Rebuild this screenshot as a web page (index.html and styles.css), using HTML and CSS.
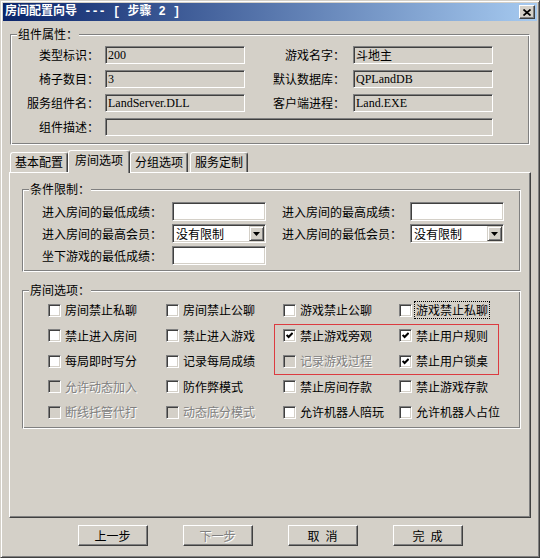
FILE: index.html
```html
<!DOCTYPE html>
<html lang="zh-CN">
<head>
  <meta charset="UTF-8">
  <title>房间配置向导</title>
  <link rel="stylesheet" href="styles.css">
</head>
<body>
  <div class="window">
    <div class="titlebar">
      <span class="title">房间配置向导 --- [ 步骤 2 ]</span>
      <span class="close">
        <svg width="8" height="7" viewBox="0 0 8 7"><path d="M0.5 0.5 L7.5 6.5 M7.5 0.5 L0.5 6.5" stroke="#000" stroke-width="1.7" fill="none"/></svg>
      </span>
    </div>

    <div class="client">
      <!-- 组件属性 -->
      <fieldset class="group">
        <legend>组件属性：</legend>
        <div class="info">
          <label class="lbl">类型标识：</label>
          <input class="field" readonly value="200">
          <label class="lbl r">游戏名字：</label>
          <input class="field" readonly value="斗地主">
          <label class="lbl">椅子数目：</label>
          <input class="field" readonly value="3">
          <label class="lbl r">默认数据库：</label>
          <input class="field" readonly value="QPLandDB">
          <label class="lbl">服务组件名：</label>
          <input class="field" readonly value="LandServer.DLL">
          <label class="lbl r">客户端进程：</label>
          <input class="field" readonly value="Land.EXE">
          <label class="lbl">组件描述：</label>
          <input class="field wide" readonly value="">
        </div>
      </fieldset>

      <div class="tabs">
        <span class="tab">基本配置</span>
        <span class="tab on">房间选项</span>
        <span class="tab">分组选项</span>
        <span class="tab">服务定制</span>
      </div>

      <div class="panel">
        <fieldset class="group">
          <legend>条件限制：</legend>
          <div class="limits">
            <label class="lbl">进入房间的最低成绩：</label>
            <input class="field white">
            <label class="lbl r">进入房间的最高成绩：</label>
            <input class="field white">
            <label class="lbl">进入房间的最高会员：</label>
            <div class="combo"><span>没有限制</span><span class="drop"><svg width="7" height="4" viewBox="0 0 7 4"><path d="M0 0 H7 L3.5 4 Z" fill="#000"/></svg></span></div>
            <label class="lbl r">进入房间的最低会员：</label>
            <div class="combo"><span>没有限制</span><span class="drop"><svg width="7" height="4" viewBox="0 0 7 4"><path d="M0 0 H7 L3.5 4 Z" fill="#000"/></svg></span></div>
            <label class="lbl">坐下游戏的最低成绩：</label>
            <input class="field white">
          </div>
        </fieldset>

        <fieldset class="group options">
          <legend>房间选项：</legend>
          <div class="opts">
            <div class="opt"><span class="box"></span><span>房间禁止私聊</span></div>
            <div class="opt"><span class="box"></span><span>房间禁止公聊</span></div>
            <div class="opt"><span class="box"></span><span>游戏禁止公聊</span></div>
            <div class="opt"><span class="box"></span><span class="focus">游戏禁止私聊</span></div>

            <div class="opt"><span class="box"></span><span>禁止进入房间</span></div>
            <div class="opt"><span class="box"></span><span>禁止进入游戏</span></div>
            <div class="opt"><span class="box"><svg width="7" height="7" viewBox="0 0 7 7"><path d="M0.6 2.9 L2.6 4.9 L6.6 0.9" stroke="#000" stroke-width="2.1" fill="none"/></svg></span><span>禁止游戏旁观</span></div>
            <div class="opt"><span class="box"><svg width="7" height="7" viewBox="0 0 7 7"><path d="M0.6 2.9 L2.6 4.9 L6.6 0.9" stroke="#000" stroke-width="2.1" fill="none"/></svg></span><span>禁止用户规则</span></div>

            <div class="opt"><span class="box"></span><span>每局即时写分</span></div>
            <div class="opt"><span class="box"></span><span>记录每局成绩</span></div>
            <div class="opt off"><span class="box"></span><span>记录游戏过程</span></div>
            <div class="opt"><span class="box"><svg width="7" height="7" viewBox="0 0 7 7"><path d="M0.6 2.9 L2.6 4.9 L6.6 0.9" stroke="#000" stroke-width="2.1" fill="none"/></svg></span><span>禁止用户锁桌</span></div>

            <div class="opt off"><span class="box"></span><span>允许动态加入</span></div>
            <div class="opt"><span class="box"></span><span>防作弊模式</span></div>
            <div class="opt"><span class="box"></span><span>禁止房间存款</span></div>
            <div class="opt"><span class="box"></span><span>禁止游戏存款</span></div>

            <div class="opt off"><span class="box"></span><span>断线托管代打</span></div>
            <div class="opt off"><span class="box"></span><span>动态底分模式</span></div>
            <div class="opt"><span class="box"></span><span>允许机器人陪玩</span></div>
            <div class="opt"><span class="box"></span><span>允许机器人占位</span></div>

            <!-- 标注框 -->
            <div class="mark"></div>
          </div>
        </fieldset>
      </div>

      <div class="actions">
        <button class="btn">上一步</button>
        <button class="btn off">下一步</button>
        <button class="btn">取&ensp;消</button>
        <button class="btn">完&ensp;成</button>
      </div>
    </div>
  </div>
</body>
</html>
```

FILE: styles.css
```css
* { box-sizing: border-box; }
body {
  margin: 0;
  background: #d4d0c8;
  font: 12px/14px "Noto Sans CJK SC", "Liberation Sans", sans-serif;
  color: #000;
}
.window {
  width: 540px;
  height: 558px;
  display: flex;
  flex-direction: column;
  padding: 2px;
  background: #d4d0c8;
  border: 1px solid;
  border-color: #d4d0c8 #404040 #404040 #d4d0c8;
  box-shadow: inset 1px 1px #fff, inset -1px -1px #808080;
}

/* 标题栏 */
.titlebar {
  height: 18px;
  flex: none;
  display: flex;
  align-items: center;
  justify-content: space-between;
  padding: 0 2px;
  background: linear-gradient(to right, #0a246a, #a6caf0);
}
.title {
  color: #fff;
  font: bold 12px/14px "Liberation Mono", "Noto Sans CJK SC", monospace;
  white-space: pre;
}
.close {
  width: 16px;
  height: 14px;
  display: grid;
  place-items: center;
  background: #d4d0c8;
  border: 1px solid;
  border-color: #fff #404040 #404040 #fff;
  box-shadow: inset -1px -1px #808080;
}

.client {
  flex: 1;
  padding: 6px 7px 0;
}

/* 分组框 */
.group {
  margin: 0;
  padding: 0;
  min-width: 0;
  border: 1px solid;
  border-color: #808080 #fff #fff #808080;
  box-shadow: inset 1px 1px #fff, inset -1px -1px #808080;
}
.group legend {
  margin-left: 6px;
  padding: 0 1px;
  line-height: 14px;
  background: #d4d0c8;
}

.lbl { white-space: nowrap; }

.info {
  display: grid;
  grid-template-columns: 94px 140px 108px 140px;
  grid-auto-rows: 18px;
  row-gap: 6px;
  align-items: center;
  padding: 5px 0 8px;
}
.info .lbl { text-align: right; padding-right: 6px; }
.info .lbl.r { padding-right: 8px; }

.field {
  width: 100%;
  height: 100%;
  margin: 0;
  padding: 0 1px 0 2px;
  font: 12px "Liberation Serif", "Noto Sans CJK SC", serif;
  color: #000;
  background: #d4d0c8;
  border: 1px solid;
  border-color: #808080 #fff #fff #808080;
  box-shadow: inset 1px 1px #404040, inset -1px -1px #d4d0c8;
  outline: none;
}
.field.wide { grid-column: 2 / 5; }
.field.white { background: #fff; }

/* 选项卡 */
.tabs {
  display: flex;
  align-items: flex-end;
  gap: 2px;
  height: 22px;
  margin-top: 5px;
}
.tab {
  width: 58px;
  height: 20px;
  text-align: center;
  line-height: 18px;
  border: 1px solid;
  border-bottom: 0;
  border-color: #fff #404040 transparent #fff;
  border-radius: 3px 3px 0 0;
  box-shadow: inset -1px 0 #808080;
  background: #d4d0c8;
}
.tab.on {
  width: 62px;
  height: 23px;
  margin: 0 -2px -1px;
  position: relative;
  z-index: 1;
}

.panel {
  height: 346px;
  margin: 0 -1px;
  padding: 9px 9px 0 12px;
  border: 1px solid;
  border-color: #fff #404040 #404040 #fff;
  box-shadow: inset -1px -1px #808080;
}

.limits {
  display: grid;
  grid-template-columns: 149px 94px 144px 94px;
  grid-auto-rows: 19px;
  row-gap: 3px;
  align-items: center;
  padding: 6px 0;
}
.limits .lbl { padding-left: 19px; }
.limits .lbl.r { padding-left: 16px; }

.combo {
  height: 100%;
  display: flex;
  align-items: center;
  justify-content: space-between;
  padding: 1px 1px 1px 3px;
  background: #fff;
  border: 1px solid;
  border-color: #808080 #fff #fff #808080;
  box-shadow: inset 1px 1px #404040, inset -1px -1px #d4d0c8;
}
.drop {
  width: 15px;
  height: 15px;
  display: grid;
  place-items: center;
  background: #d4d0c8;
  border: 1px solid;
  border-color: #d4d0c8 #404040 #404040 #d4d0c8;
  box-shadow: inset 1px 1px #fff, inset -1px -1px #808080;
}

.options { margin-top: 11px; }
.opts {
  position: relative;
  display: grid;
  grid-template-columns: 118px 117px 116px 117px;
  grid-auto-rows: 16px;
  row-gap: 9.5px;
  padding: 5px 0 8px 25px;
}
.opt {
  display: flex;
  align-items: center;
  gap: 4px;
  white-space: nowrap;
}
.box {
  flex: none;
  width: 13px;
  height: 13px;
  display: grid;
  place-items: center;
  background: #fff;
  border: 1px solid;
  border-color: #808080 #fff #fff #808080;
  box-shadow: inset 1px 1px #404040, inset -1px -1px #d4d0c8;
}
.opt.off .box { background: #d4d0c8; }
.opt.off span + span { color: #808080; text-shadow: 1px 1px #fff; }
.focus { outline: 1px dotted #000; outline-offset: 1px; }

.mark {
  position: absolute;
  left: 251px;
  top: 27px;
  width: 225px;
  height: 51px;
  border: 1px solid #dc3b40;
  pointer-events: none;
}

/* 按钮 */
.actions {
  display: flex;
  justify-content: center;
  gap: 35px;
  margin-top: 7px;
}
.btn {
  width: 70px;
  height: 21px;
  padding: 0;
  font: 12px/14px "Noto Sans CJK SC", sans-serif;
  color: #000;
  background: #d4d0c8;
  border: 1px solid;
  border-color: #fff #404040 #404040 #fff;
  box-shadow: inset -1px -1px #808080;
}
.btn.off { color: #808080; text-shadow: 1px 1px #fff; }
```
